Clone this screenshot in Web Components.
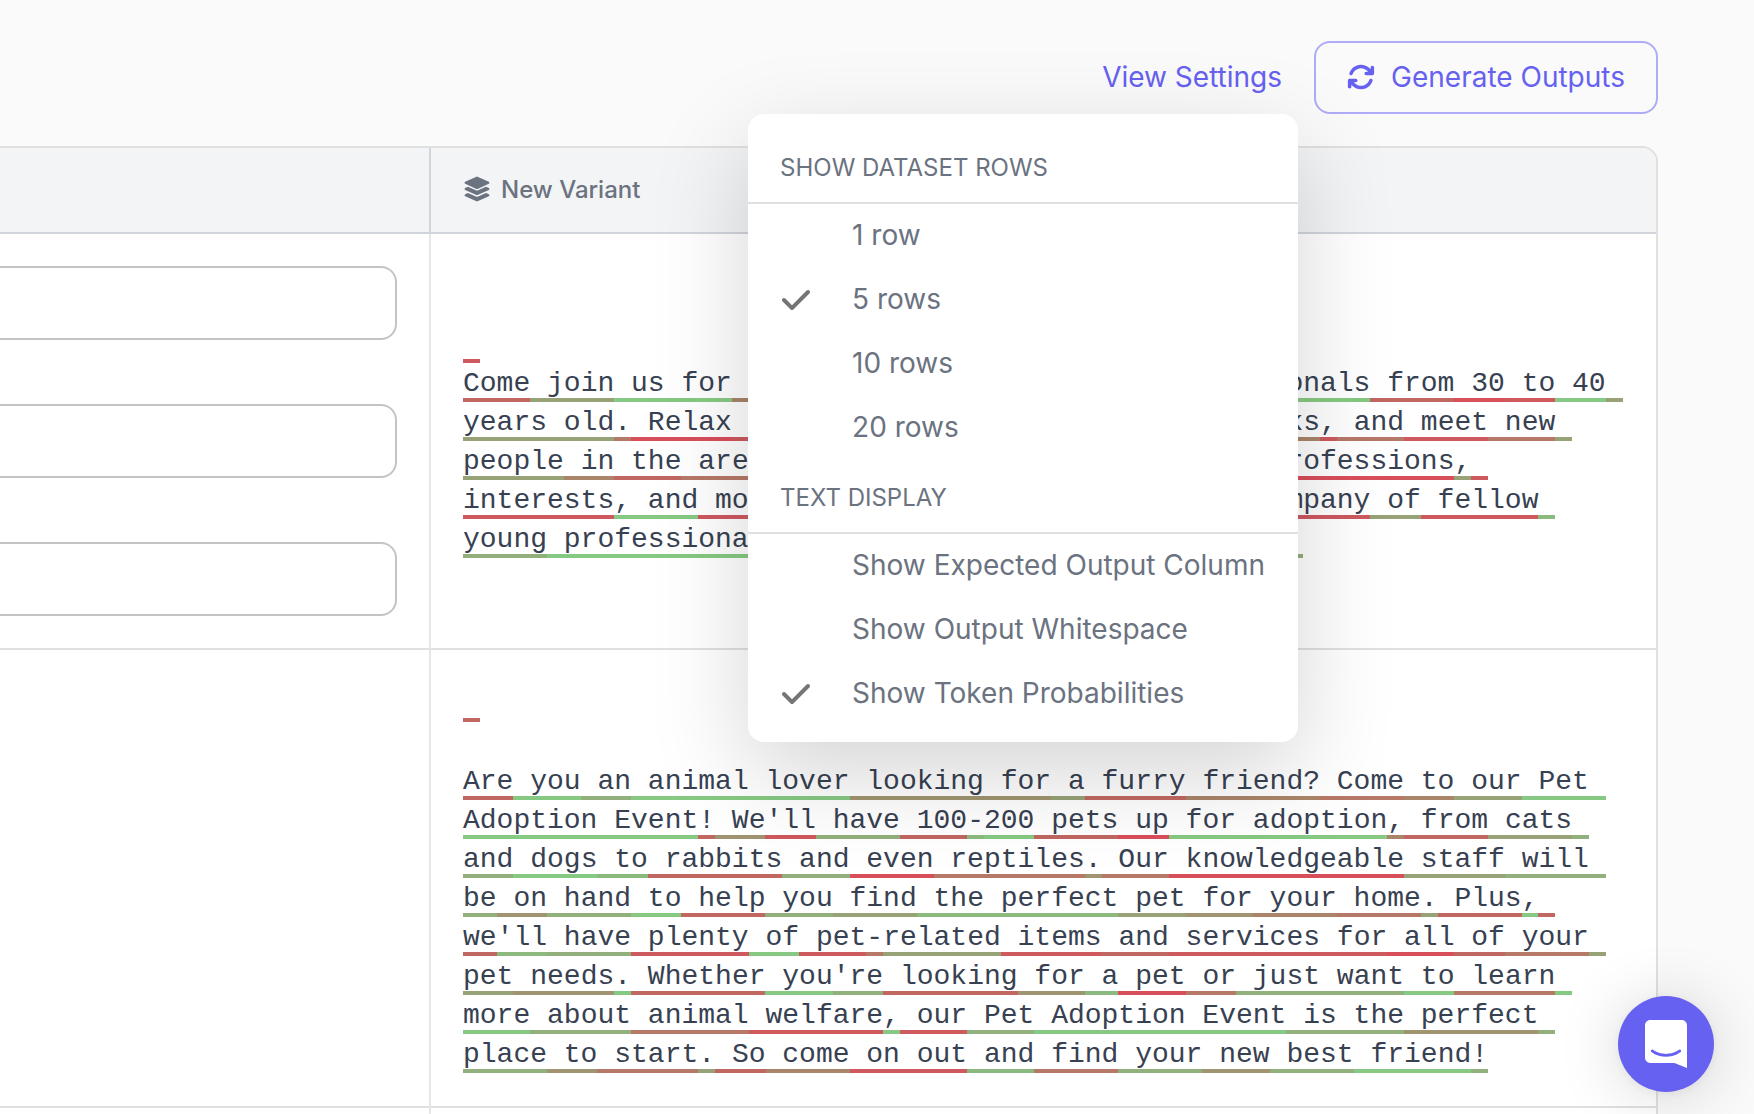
<!DOCTYPE html>
<html lang="en">
<head>
<meta charset="utf-8">
<meta name="viewport" content="width=device-width, initial-scale=1">
<title>Prompt variants</title>
<style>
  body {
    margin: 0;
    background: #fafafa;
    color: #6b7280;
    font-family: Inter, sans-serif;
    font-size: 28px;
    --accent: #6661f0;
    --accent-soft: #aeabf7;
    --line: #e0e0e0;
    --line-strong: #d1d5db;
  }
</style>
</head>
<body>
<variants-page></variants-page>

<script>
// Underline colours, from a likely token (g) to an unlikely one (x)
const TONES = {
  g: '#86c982',
  h: '#8cba7e',
  m: '#91b07b',
  o: '#98a277',
  t: '#a09570',
  b: '#aa8569',
  p: '#b77967',
  r: '#c16761',
  s: '#ce595f',
  x: '#d94e5b'
};

// One array per line, each token is its tone followed by its text
const OUTPUTS = {
  mixer: [
    ['s '],
    ['rCome', 'o join', 'g us for', 'b a', 'o social event', 'r of', 'g young', 'g professionals', 'r from', 'x 30', 's to', 'g 40', 'o '],
    ['oyears old', 'p.', 'x Relax', 's with', 'o some good', 'r music', 'g,', 'p enjoy', 'b drinks', 's,', 'p and', 's meet', 'p new', 'o '],
    ['opeople', 'b in', 'r the', 'p area', 'o.', 'r Talk', 'g about', 'o your', 'r hobbies', 'm and', 'x professions', 'o,', 's '],
    ['sinterests', 'g, and', 's more', 'o while', 'r enjoying', 'g the', 'p amazing', 's company', 'o of', 's fellow', 'h '],
    ['myoung', 'g professionals', 'o at', 'm our', 'r fun', 'g local', 'o get-together', 'm!']
  ],
  adoption: [
    ['r '],
    [],
    ['rAre', 'g you', 'm an', 'g animal lover', 't looking for', 'o a', 'r furry', 'b friend?', 'p Come', 'b to', 'o our', 'g Pet '],
    ['gAdoption Event', 'r!', 't We', "s'll", 'm have', 'r 100', 'h-', 'g200', 'r pets', 'x up', 'g for adoption', 'b,', 'r from', 'o cats', 'm '],
    ['mand', 'g dogs', 'h to', 'r rabbits', 'm and', 'x even', 'p reptiles', 't.', 'p Our', 'x knowledgeable', 'o staff', 'm will '],
    ['mbe', 't on', 'm hand', 'g to', 'r help', 'm you', 'o find', 'h the perfect', 'o pet', 't for', 'b your', 'p home', 'o.', 'r Plus', 'g,', 'r '],
    ['rwe', "h'll", 'm have', 's plenty', 'g of', 's pet', 'p-', 'orelated', 's items', 'r and', 's services for', 'x all', 'r of', 'p your', 'o '],
    ['opet', 't needs', 'g.', 'r Whether', 'g you', "m're", 'r looking', 't for', 'h a', 'x pet', 'p or', 'm just want', 'g to', 'p learn', 'g '],
    ['gmore', 'm about', 'p animal', 's welfare', 'g,', 's our', 'm Pet', 'g Adoption Event', 'm is the', 't perfect', 'm '],
    ['mplace', 't to', 'p start', 'o.', 'r So', 'b come', 's on out', 'h and', 'p find', 'm your', 't new', 'm best', 'g friend', 'm!']
  ]
};

const ICONS = {
  sync: ['0 0 512 512', 'M105.1 202.6c7.7-21.8 20.2-42.3 37.8-59.8c62.5-62.5 163.8-62.5 226.3 0L386.3 160H352c-17.7 0-32 14.3-32 32s14.3 32 32 32H463.9c17.7 0 32-14.3 32-32V80c0-17.7-14.3-32-32-32s-32 14.3-32 32v35.2L414.4 97.6c-87.5-87.5-229.3-87.5-316.8 0C73.2 122 55.6 150.7 44.8 181.4c-5.9 16.7 2.9 34.9 19.5 40.8s34.9-2.9 40.8-19.5zM39 289.3c-5 1.5-9.8 4.2-13.7 8.2c-4 4-6.7 8.8-8.1 14c-.3 1.2-.6 2.5-.8 3.8c-.3 1.7-.4 3.4-.4 5.1V432c0 17.7 14.3 32 32 32s32-14.3 32-32V396.9l17.6 17.5c87.5 87.4 229.3 87.4 316.7 0c24.4-24.4 42.1-53.1 52.9-83.7c5.9-16.7-2.9-34.9-19.5-40.8s-34.9 2.9-40.8 19.5c-7.7 21.8-20.2 42.3-37.8 59.8c-62.5 62.5-163.8 62.5-226.3 0l-.1-.1L125.6 352H160c17.7 0 32-14.3 32-32s-14.3-32-32-32H48.4c-1.6 0-3.2 .1-4.8 .3s-3.1 .5-4.6 1z'],
  layers: ['-32 -32 576 576', 'M12.41 148.02l232.94 105.67c6.8 3.09 14.49 3.09 21.29 0l232.94-105.67c16.55-7.51 16.55-32.52 0-40.03L266.65 2.31a25.607 25.607 0 0 0-21.29 0L12.41 107.98c-16.55 7.51-16.55 32.53 0 40.04zm487.18 88.28l-58.09-26.33-161.64 73.27c-7.56 3.43-15.59 5.17-23.86 5.17s-16.29-1.74-23.86-5.17L70.51 209.97l-58.1 26.33c-16.55 7.5-16.55 32.5 0 40l232.94 105.59c6.8 3.08 14.49 3.08 21.29 0L499.59 276.3c16.55-7.5 16.55-32.5 0-40zm0 127.8l-57.87-26.23-161.86 73.37c-7.56 3.43-15.59 5.17-23.86 5.17s-16.29-1.74-23.86-5.17L70.29 337.87 12.41 364.1c-16.55 7.5-16.55 32.5 0 40l232.94 105.59c6.8 3.08 14.49 3.08 21.29 0L499.59 404.1c16.55-7.5 16.55-32.5 0-40z']
};

class AppIcon extends HTMLElement {
  constructor() {
    super();
    this.attachShadow({ mode: 'open' });
  }

  connectedCallback() {
    const [box, path] = ICONS[this.getAttribute('name')];
    this.shadowRoot.innerHTML = `
    <style>
      :host { display: block; width: 28px; height: 28px; flex: none; }
      svg { display: block; width: 100%; height: 100%; fill: currentColor; }
    </style>
    <svg viewBox="${box}" aria-hidden="true"><path d="${path}"/></svg>
    `;
  }
}

class AppButton extends HTMLElement {
  constructor() {
    super();
    this.attachShadow({ mode: 'open' });
  }

  connectedCallback() {
    this.shadowRoot.innerHTML = `
    <style>
      :host { display: block; }
      button {
        display: flex;
        align-items: center;
        gap: 16px;
        box-sizing: border-box;
        height: 73px;
        padding: 0 16px 2px;
        border: 0;
        background: none;
        color: var(--accent);
        font: inherit;
        white-space: nowrap;
        cursor: pointer;
      }
      :host([outlined]) button {
        padding: 0 31px 2px;
        border: 2px solid var(--accent-soft);
        border-radius: 16px;
      }
    </style>
    <button type="button"><slot name="icon"></slot><slot></slot></button>
    `;
  }
}

class SettingsMenu extends HTMLElement {
  constructor() {
    super();
    this.attachShadow({ mode: 'open' });
  }

  item(type, name, label, checked) {
    return `
      <label>
        <input type="${type}" name="${name}" ${checked ? 'checked' : ''}>
        <svg viewBox="0 0 448 512" aria-hidden="true"><path d="M438.6 105.4c12.5 12.5 12.5 32.8 0 45.3l-256 256c-12.5 12.5-32.8 12.5-45.3 0l-128-128c-12.5-12.5-12.5-32.8 0-45.3s32.8-12.5 45.3 0L160 338.7 393.4 105.4c12.5-12.5 32.8-12.5 45.3 0z"/></svg>
        <span>${label}</span>
      </label>`;
  }

  connectedCallback() {
    this.shadowRoot.innerHTML = `
    <style>
      :host {
        display: block;
        box-sizing: border-box;
        min-width: 550px;
        padding: 16px 0;
        border-radius: 16px;
        background: #fff;
        box-shadow: 0 32px 96px rgba(0, 0, 0, 0.17);
      }
      fieldset { margin: 0; padding: 0; border: 0; }
      legend {
        display: flex;
        align-items: center;
        box-sizing: border-box;
        width: 100%;
        height: 74px;
        padding: 2px 32px 0;
        border-bottom: 2px solid var(--line);
        font-size: 24px;
        text-transform: uppercase;
      }
      label {
        display: grid;
        grid-template-columns: 32px 1fr;
        column-gap: 40px;
        align-items: center;
        height: 64px;
        padding: 0 32px;
        line-height: 32px;
        white-space: nowrap;
      }
      span { padding-bottom: 2px; }
      input {
        grid-area: 1 / 1;
        appearance: none;
        width: 32px;
        height: 32px;
        margin: 0;
      }
      svg {
        grid-area: 1 / 1;
        width: 32px;
        height: 32px;
        fill: #757575;
        pointer-events: none;
      }
      input:not(:checked) + svg { visibility: hidden; }
    </style>
    <fieldset>
      <legend>Show dataset rows</legend>
      ${this.item('radio', 'rows', '1 row')}
      ${this.item('radio', 'rows', '5 rows', true)}
      ${this.item('radio', 'rows', '10 rows')}
      ${this.item('radio', 'rows', '20 rows')}
    </fieldset>
    <fieldset>
      <legend>Text display</legend>
      ${this.item('checkbox', 'expected', 'Show Expected Output Column')}
      ${this.item('checkbox', 'whitespace', 'Show Output Whitespace')}
      ${this.item('checkbox', 'probabilities', 'Show Token Probabilities', true)}
    </fieldset>
    `;
  }
}

class TokenOutput extends HTMLElement {
  constructor() {
    super();
    this.attachShadow({ mode: 'open' });
  }

  connectedCallback() {
    const lines = OUTPUTS[this.getAttribute('output')];
    this.shadowRoot.innerHTML = `
    <style>
      :host {
        display: block;
        color: #374151;
        font-family: "Liberation Mono", monospace;
        font-size: 28px;
        line-height: 41px;
      }
      .line { display: flex; height: 39px; white-space: pre; }
      .line span {
        box-sizing: border-box;
        height: 39px;
        border-bottom: 4px solid;
      }
    </style>
    ${lines.map(line => `<div class="line">${line.map(token =>
      `<span style="border-color: ${TONES[token[0]]}">${token.slice(1)}</span>`).join('')}</div>`).join('')}
    `;
  }
}

class VariantTable extends HTMLElement {
  constructor() {
    super();
    this.attachShadow({ mode: 'open' });
  }

  connectedCallback() {
    this.shadowRoot.innerHTML = `
    <style>
      :host {
        display: block;
        box-sizing: border-box;
        overflow: hidden;
        border: solid var(--line);
        border-width: 2px 2px 0 0;
        border-radius: 0 16px 0 0;
        background: #fff;
      }
      table {
        width: 100%;
        height: 100%;
        border-collapse: separate;
        border-spacing: 0;
        table-layout: fixed;
      }
      .inputs { width: 431px; }
      th, td {
        box-sizing: border-box;
        padding: 32px;
        border-bottom: 2px solid var(--line);
        text-align: left;
        vertical-align: middle;
      }
      th {
        height: 86px;
        padding: 0 32px;
        border-color: var(--line-strong);
        background: #f3f4f6;
        font-size: 24px;
        font-weight: 500;
      }
      th:first-child { border-right: 2px solid var(--line-strong); }
      td:first-child { border-right: 2px solid #e5e7eb; padding-left: 0; }
      .title { display: flex; align-items: center; gap: 10px; padding-bottom: 2px; }
      .fields { display: grid; gap: 64px; }
      input {
        box-sizing: border-box;
        width: 100%;
        height: 74px;
        padding: 0 24px;
        border: solid #c4c4c4;
        border-width: 2px 2px 2px 0;
        border-radius: 0 16px 16px 0;
        background: #fff;
        color: inherit;
        font: inherit;
      }
      .tall { height: 458px; }
      .rest td { height: 100%; border-bottom: 0; }
    </style>
    <table>
      <thead>
        <tr>
          <th class="inputs"></th>
          <th><div class="title"><app-icon name="layers"></app-icon><slot></slot></div></th>
        </tr>
      </thead>
      <tbody>
        <tr>
          <td>
            <div class="fields">
              <input type="text" aria-label="Event">
              <input type="text" aria-label="Audience">
              <input type="text" aria-label="Details">
            </div>
          </td>
          <td><token-output output="mixer"></token-output></td>
        </tr>
        <tr class="tall">
          <td></td>
          <td><token-output output="adoption"></token-output></td>
        </tr>
        <tr class="rest"><td></td><td></td></tr>
      </tbody>
    </table>
    `;
  }
}

class ChatLauncher extends HTMLElement {
  constructor() {
    super();
    this.attachShadow({ mode: 'open' });
  }

  connectedCallback() {
    this.shadowRoot.innerHTML = `
    <style>
      :host { display: block; }
      button {
        display: grid;
        place-items: center;
        width: 96px;
        height: 96px;
        padding: 0;
        border: 0;
        border-radius: 50%;
        background: var(--accent);
        box-shadow: 0 2px 12px rgba(0, 0, 0, 0.06), 0 4px 64px rgba(0, 0, 0, 0.16);
        cursor: pointer;
      }
      svg { display: block; width: 42px; height: 48px; fill: #fff; }
    </style>
    <button type="button" aria-label="Open chat">
      <svg viewBox="0 0 28 32" aria-hidden="true"><path d="M28 32s-4.714-1.855-8.527-3.34H3.437C1.54 28.66 0 27.026 0 25.013V3.644C0 1.633 1.54 0 3.437 0h21.125c1.898 0 3.437 1.632 3.437 3.645v18.404H28V32zm-4.139-11.982a.88.88 0 00-1.292-.105c-.03.026-3.015 2.681-8.57 2.681-5.486 0-8.517-2.636-8.571-2.684a.88.88 0 00-1.29.107 1.01 1.01 0 00-.219.708.992.992 0 00.318.664c.142.128 3.537 3.15 9.762 3.15 6.226 0 9.621-3.022 9.763-3.15a.992.992 0 00.317-.664 1.01 1.01 0 00-.218-.707z"/></svg>
    </button>
    `;
  }
}

class VariantsPage extends HTMLElement {
  constructor() {
    super();
    this.attachShadow({ mode: 'open' });
  }

  connectedCallback() {
    this.shadowRoot.innerHTML = `
    <style>
      :host {
        display: flex;
        flex-direction: column;
        box-sizing: border-box;
        height: 100vh;
        padding-right: 96px;
        overflow: hidden;
      }
      header {
        display: flex;
        justify-content: flex-end;
        gap: 16px;
        padding: 41px 0 32px;
      }
      .settings { position: relative; }
      settings-menu { position: absolute; top: 100%; right: 0; z-index: 1; }
      variant-table { flex: 1; min-height: 0; }
      chat-launcher { position: fixed; right: 40px; bottom: 22px; z-index: 2; }
    </style>
    <header>
      <div class="settings">
        <app-button>View Settings</app-button>
        <settings-menu></settings-menu>
      </div>
      <app-button outlined><app-icon slot="icon" name="sync"></app-icon>Generate Outputs</app-button>
    </header>
    <variant-table>New Variant</variant-table>
    <chat-launcher></chat-launcher>
    `;
  }
}

customElements.define('app-icon', AppIcon);
customElements.define('app-button', AppButton);
customElements.define('settings-menu', SettingsMenu);
customElements.define('token-output', TokenOutput);
customElements.define('variant-table', VariantTable);
customElements.define('chat-launcher', ChatLauncher);
customElements.define('variants-page', VariantsPage);
</script>
</body>
</html>
